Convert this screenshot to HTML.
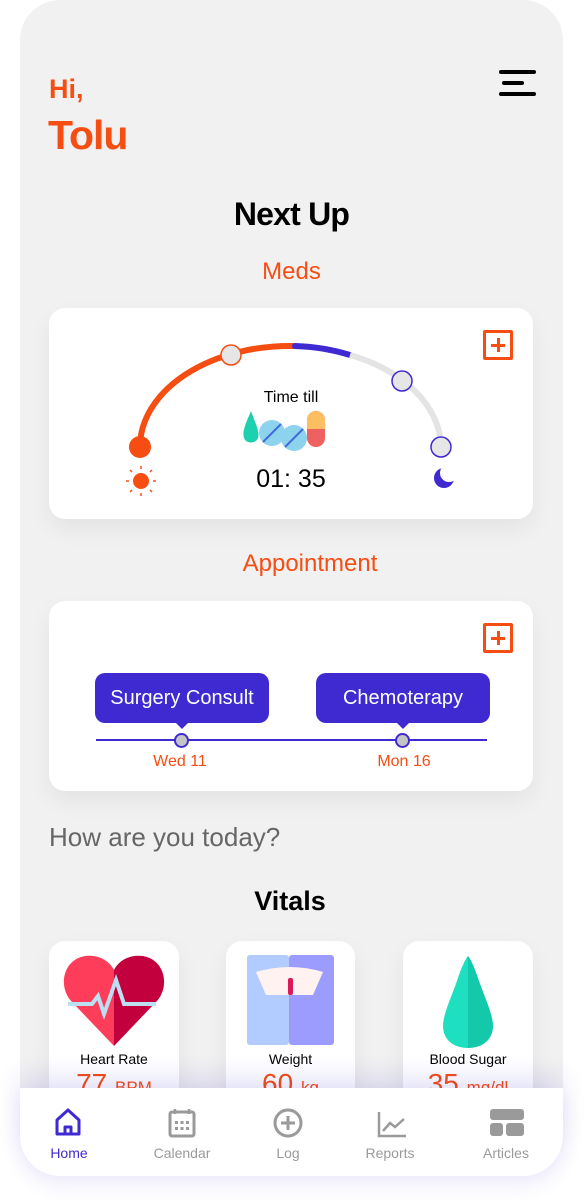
<!DOCTYPE html>
<html><head><meta charset="utf-8"><style>
*{margin:0;padding:0;box-sizing:border-box}
body{width:585px;height:1200px;background:#fff;font-family:"Liberation Sans",sans-serif;position:relative;overflow:hidden}
.a{position:absolute}
.phone{left:20px;top:0;width:543px;height:1176px;background:#f1f1f1;border-radius:40px}
.card{background:#fff;border-radius:16px;box-shadow:0 10px 24px rgba(0,0,0,0.06)}
.or{color:#f64d12}
.c{text-align:center}
.plus{width:30px;height:30px;border:3px solid #f64d12;border-radius:2px}
.plus:before{content:"";position:absolute;left:5px;top:10.5px;width:14px;height:3px;background:#f64d12}
.plus:after{content:"";position:absolute;left:10.5px;top:5px;width:3px;height:14px;background:#f64d12}
.pill{background:#3f2ad1;color:#fff;border-radius:10px;font-size:20px;text-align:center;line-height:50px}
.pill:after{content:"";position:absolute;left:50%;bottom:-6px;margin-left:-6px;border-left:6px solid transparent;border-right:6px solid transparent;border-top:6px solid #3f2ad1}
.dot{width:15px;height:15px;border-radius:50%;background:#c4c4c4;border:2px solid #3f2ad1}
.nav{left:20px;top:1088px;width:543px;height:88px;background:#fff;border-radius:0 0 40px 40px;box-shadow:0 -12px 24px rgba(60,40,200,0.12),0 10px 20px rgba(60,40,200,0.08)}
.nl{font-size:14px;color:#9a9a9a;text-align:center;width:90px}
</style></head><body>
<div class="a phone"></div>
<div class="a or" style="left:49px;top:74px;font-size:27px;font-weight:bold">Hi,</div>
<div class="a or" style="left:48px;top:112px;font-size:41px;font-weight:bold;letter-spacing:-1px">Tolu</div>
<div class="a" style="left:499px;top:70px;width:37px;height:4px;background:#000;border-radius:2px"></div>
<div class="a" style="left:502px;top:81px;width:22px;height:4px;background:#000;border-radius:2px"></div>
<div class="a" style="left:499px;top:92px;width:37px;height:4px;background:#000;border-radius:2px"></div>
<div class="a c" style="left:0;width:583px;top:196px;font-size:32px;font-weight:bold;color:#000;letter-spacing:-0.8px">Next Up</div>
<div class="a c or" style="left:0;width:583px;top:258px;font-size:24px">Meds</div>

<div class="a card" style="left:49px;top:308px;width:484px;height:211px"></div>
<div class="a plus" style="left:483px;top:330px"></div>
<svg class="a" style="left:0;top:0" width="585" height="600">
<path d="M140 447 A150 101 0 0 1 295 346" fill="none" stroke="#f64d12" stroke-width="6"/>
<path d="M295 346 A150 101 0 0 1 350 355" fill="none" stroke="#3f2ad1" stroke-width="6" stroke-linecap="round"/>
<path d="M350 355 A150 101 0 0 1 441 447" fill="none" stroke="#e4e4e4" stroke-width="6"/>
<circle cx="140" cy="447" r="11" fill="#f64d12"/>
<circle cx="231" cy="355" r="10" fill="#e6e6e6" stroke="#f64d12" stroke-width="1.5"/>
<circle cx="402" cy="381" r="10" fill="#e6e6e6" stroke="#3f2ad1" stroke-width="1.5"/>
<circle cx="441" cy="447" r="10" fill="#e6e6e6" stroke="#3f2ad1" stroke-width="1.5"/>
<circle cx="141" cy="481" r="8" fill="#f64d12"/>
<g stroke="#f64d12" stroke-width="1.5">
<line x1="141" y1="466" x2="141" y2="469"/><line x1="141" y1="493" x2="141" y2="496"/>
<line x1="126" y1="481" x2="129" y2="481"/><line x1="153" y1="481" x2="156" y2="481"/>
<line x1="130" y1="470" x2="132" y2="472"/><line x1="150" y1="490" x2="152" y2="492"/>
<line x1="152" y1="470" x2="150" y2="472"/><line x1="130" y1="492" x2="132" y2="490"/>
</g>
<circle cx="444" cy="478" r="10" fill="#3f2ad1"/>
<circle cx="449" cy="473" r="9" fill="#fff"/>
<path d="M251 411 C245 425 242 432 244 438 C246 444 256 444 258 438 C260 432 256 425 251 411Z" fill="#1cd0b0"/>
<circle cx="272" cy="433" r="13" fill="#8ed3ee"/>
<circle cx="294" cy="438" r="13" fill="#8ed3ee"/>
<line x1="263" y1="442" x2="281" y2="424" stroke="#3f6bd8" stroke-width="2"/>
<line x1="285" y1="447" x2="303" y2="429" stroke="#3f6bd8" stroke-width="2"/>
<rect x="307" y="411" width="18" height="36" rx="9" fill="#ef6060"/>
<path d="M307 429 V420 A9 9 0 0 1 325 420 V429Z" fill="#fdbe62"/>
</svg>
<div class="a c" style="left:241px;width:100px;top:389px;font-size:16px">Time till</div>
<div class="a c" style="left:221px;width:140px;top:465px;font-size:25px">01: 35</div>

<div class="a c or" style="left:0;width:620px;top:550px;font-size:24px">Appointment</div>
<div class="a card" style="left:49px;top:601px;width:484px;height:190px"></div>
<div class="a plus" style="left:483px;top:623px"></div>
<div class="a" style="left:96px;top:739px;width:391px;height:2px;background:#3f2ad1"></div>
<div class="a pill" style="left:95px;top:673px;width:174px">Surgery Consult</div>
<div class="a pill" style="left:316px;top:673px;width:174px">Chemoterapy</div>
<div class="a dot" style="left:174px;top:733px"></div>
<div class="a dot" style="left:395px;top:733px"></div>
<div class="a c or" style="left:130px;width:100px;top:753px;font-size:16px">Wed 11</div>
<div class="a c or" style="left:354px;width:100px;top:753px;font-size:16px">Mon 16</div>

<div class="a" style="left:49px;top:822px;font-size:26px;color:#666">How are you today?</div>
<div class="a c" style="left:0;width:580px;top:886px;font-size:27px;font-weight:bold">Vitals</div>

<div class="a card" style="left:49px;top:941px;width:130px;height:160px"></div>
<div class="a card" style="left:226px;top:941px;width:129px;height:160px"></div>
<div class="a card" style="left:403px;top:941px;width:130px;height:160px"></div>
<svg class="a" style="left:0;top:940px" width="585" height="160">
<path d="M114 106 L72 62 C58 48 62 20 85 16 C100 14 110 22 114 30Z" fill="#fe3d5b"/>
<path d="M114 106 L156 62 C170 48 166 20 143 16 C128 14 118 22 114 30Z" fill="#c2003e"/>
<polyline points="68,64 92,64 98,56 104,74 116,40 124,64 156,64" fill="none" stroke="#bcdff2" stroke-width="4"/>
<rect x="247" y="15" width="42" height="90" rx="3" fill="#b2ccff"/>
<rect x="289" y="15" width="45" height="90" rx="3" fill="#9c9cff"/>
<path d="M256 32 Q290 22 323 32 L313 55 L266 55Z" fill="#fff2f0"/>
<rect x="288" y="38" width="5" height="17" rx="2" fill="#d91b5c"/>
<path d="M468 16 C466 18 462 26 458 38 C452 56 443 74 443 86 C443 100 454 108 468 108 Z" fill="#1ee0c0"/>
<path d="M468 16 C470 18 474 26 478 38 C484 56 493 74 493 86 C493 100 482 108 468 108 Z" fill="#14c9aa"/>
</svg>
<div class="a c" style="left:49px;width:130px;top:1051px;font-size:14px">Heart Rate</div>
<div class="a c" style="left:226px;width:129px;top:1051px;font-size:14px">Weight</div>
<div class="a c" style="left:403px;width:130px;top:1051px;font-size:14px">Blood Sugar</div>
<div class="a c or" style="left:49px;width:130px;top:1068px;font-size:28px">77 <span style="font-size:17px">BPM</span></div>
<div class="a c or" style="left:226px;width:129px;top:1068px;font-size:28px">60 <span style="font-size:17px">kg</span></div>
<div class="a c or" style="left:403px;width:130px;top:1068px;font-size:28px">35 <span style="font-size:17px">mg/dl</span></div>

<div class="a nav"></div>
<svg class="a" style="left:0;top:1100px" width="585" height="45">
<path d="M57 34 V20 L68 10 L79 20 V34 Z M65 34 V27 H71 V34" fill="none" stroke="#3f2ad1" stroke-width="3" stroke-linejoin="round"/>
<rect x="170" y="12" width="24" height="24" rx="2" fill="none" stroke="#9a9a9a" stroke-width="3"/>
<line x1="175" y1="9" x2="175" y2="14" stroke="#9a9a9a" stroke-width="2.5"/><line x1="189" y1="9" x2="189" y2="14" stroke="#9a9a9a" stroke-width="2.5"/>
<g fill="#9a9a9a"><rect x="175" y="21" width="3" height="3"/><rect x="180.5" y="21" width="3" height="3"/><rect x="186" y="21" width="3" height="3"/><rect x="175" y="27" width="3" height="3"/><rect x="180.5" y="27" width="3" height="3"/><rect x="186" y="27" width="3" height="3"/></g>
<circle cx="288" cy="23" r="13" fill="none" stroke="#9a9a9a" stroke-width="3"/>
<line x1="281" y1="23" x2="295" y2="23" stroke="#9a9a9a" stroke-width="3"/><line x1="288" y1="16" x2="288" y2="30" stroke="#9a9a9a" stroke-width="3"/>
<polyline points="379,12 379,36 406,36" fill="none" stroke="#9a9a9a" stroke-width="2.5"/>
<polyline points="383,31 390,23 395,27 404,19" fill="none" stroke="#9a9a9a" stroke-width="2.5"/>
<rect x="490" y="9" width="34" height="11" rx="3" fill="#9a9a9a"/>
<rect x="490" y="23" width="13" height="13" rx="3" fill="#9a9a9a"/>
<rect x="506" y="23" width="18" height="13" rx="3" fill="#9a9a9a"/>
</svg>
<div class="a nl" style="left:24px;top:1145px;color:#3f2ad1">Home</div>
<div class="a nl" style="left:137px;top:1145px">Calendar</div>
<div class="a nl" style="left:243px;top:1145px">Log</div>
<div class="a nl" style="left:345px;top:1145px">Reports</div>
<div class="a nl" style="left:461px;top:1145px">Articles</div>
</body></html>
